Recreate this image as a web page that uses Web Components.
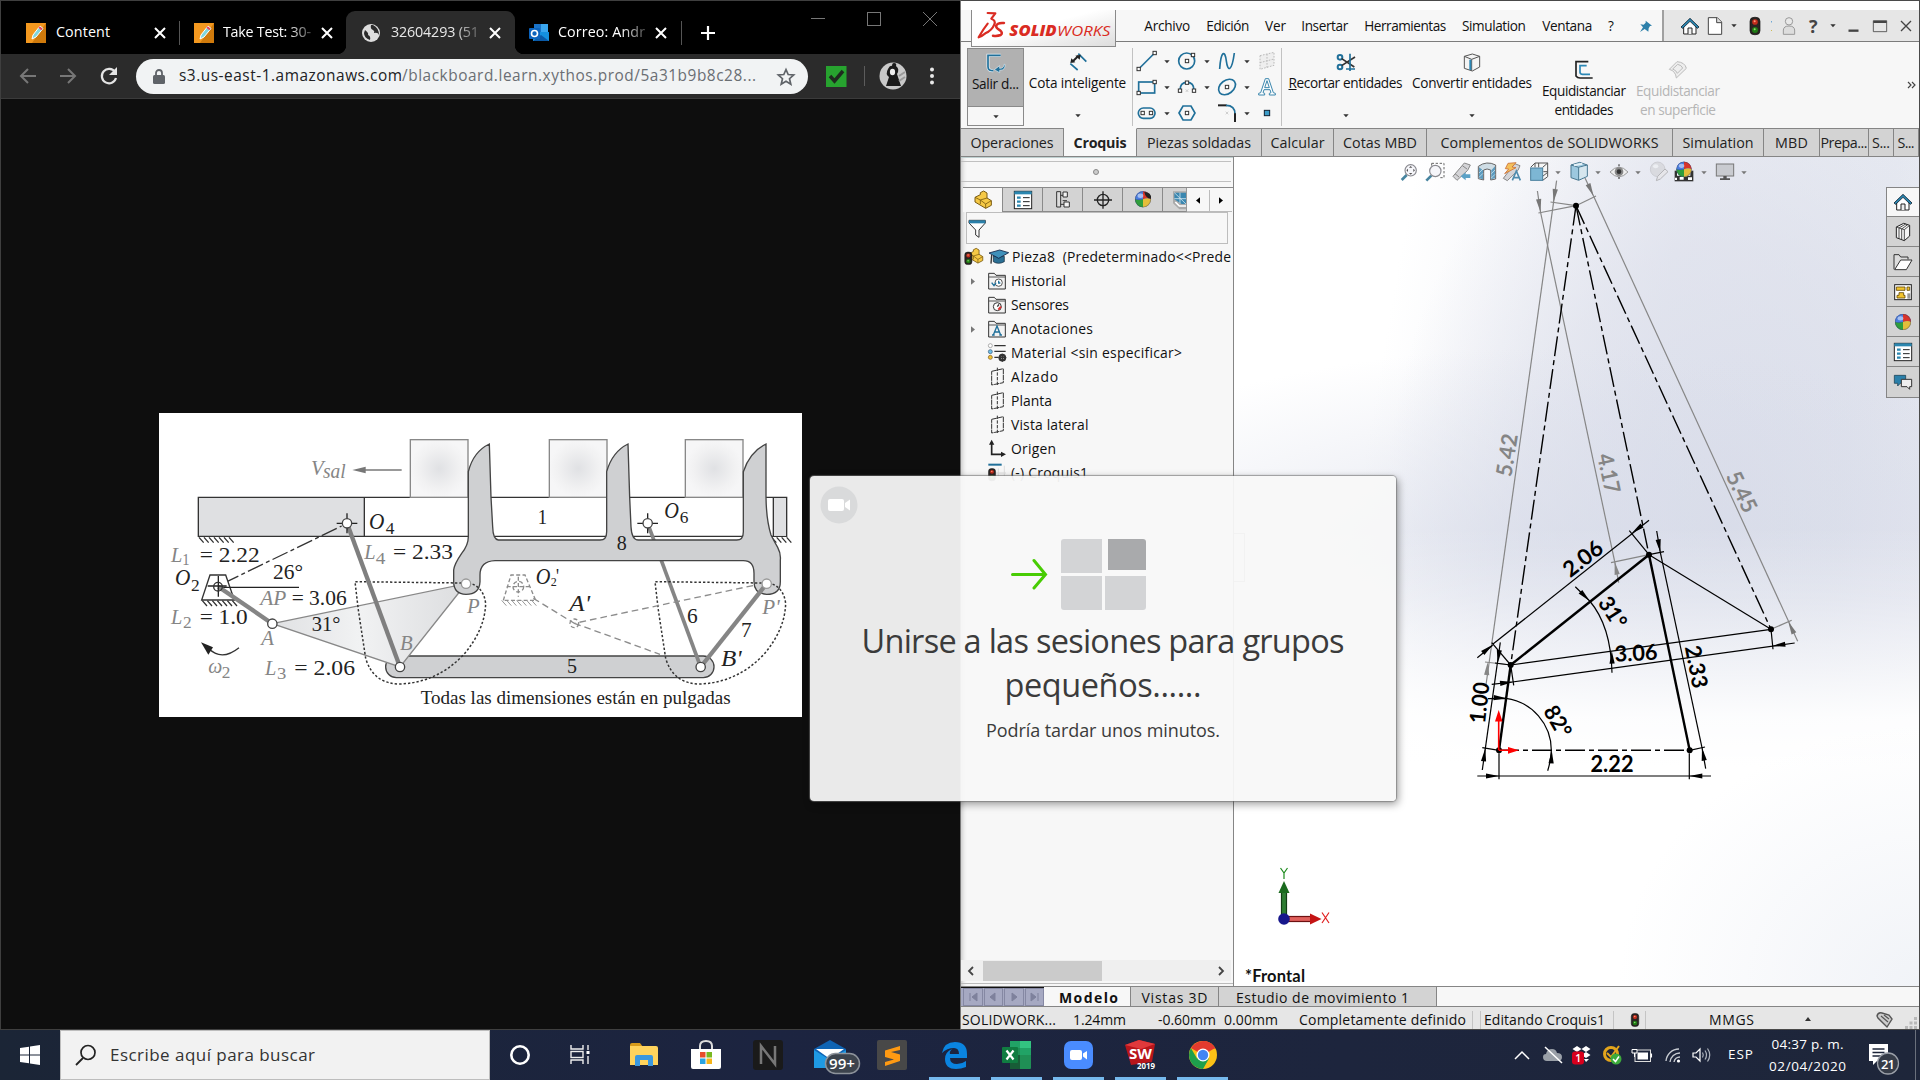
<!DOCTYPE html>
<html lang="es">
<head>
<meta charset="utf-8">
<title>Escritorio</title>
<style>
html,body{margin:0;padding:0;width:1920px;height:1080px;overflow:hidden;background:#0e0e0e}
body{font-family:"Open Sans","Noto Sans",sans-serif;font-size:14px;color:#111}
</style>
</head>
<body>
<desk-top></desk-top>
<script>
/* ---------- icon library: [width, height, viewBox, markup] ---------- */
const IC = {};
// three drawing units per pixel, centred at cx,cy
const ic3 = (n,cx,cy,w,h,m)=>{IC[n]=[w,h,`${cx-w*1.5} ${cy-h*1.5} ${w*3} ${h*3}`,m]};
const ic1 = (n,w,h,m)=>{IC[n]=[w,h,`0 0 ${w} ${h}`,m]};
const B='#20709a', K='#333';
const sq=(x,y)=>`<rect x="${x-5}" y="${y-5}" width="10" height="10" fill="#fff" stroke="${K}" stroke-width="3"/>`;
ic3('down',0,0,6,3,'<path d="M-8-4H8L0 5Z" fill="#333"/>');
ic3('downg',0,0,6,3,'<path d="M-8-4H8L0 5Z" fill="#777"/>');
ic3('exit',105,188,22,22,`<path d="M119 165H81V199Q81 211 97 211" fill="none" stroke="#e8f2f8" stroke-width="9"/><path d="M119 165H81V199Q81 211 97 211" fill="none" stroke="${B}" stroke-width="5"/><path d="M129 192Q129 204 116 204V196L100 208L116 217V210Q134 210 132 192Z" fill="${B}" stroke="#dceaf2" stroke-width="2"/>`);
ic3('dim',351,189,20,20,`<path d="M328 194L350 213M352 164L376 188" stroke="${B}" stroke-width="5"/><path d="M334 188L352 171" stroke="#222" stroke-width="6"/><path d="M328 192L331 178L343 190ZM359 167L356 182L343 170Z" fill="#222"/>`);
ic3('line',562,183,22,22,`<path d="M537 207L585 159" stroke="${B}" stroke-width="5"/>${sq(537,207)}${sq(585,159)}`);
ic3('circ',681,183,20,20,`<circle cx="680" cy="183" r="24" fill="none" stroke="${B}" stroke-width="5"/>${sq(681,183)}${sq(699,165)}`);
ic3('spline',801,183,20,20,`<path d="M779 207C783 150 795 150 799 183C803 215 815 218 823 159" fill="none" stroke="${B}" stroke-width="5"/>`);
ic3('plane3d',922,183,18,20,`<path d="M901 167L943 157V196L901 208ZM922 162V203M901 188L943 177" fill="#eee" stroke="#bbb" stroke-width="3" stroke-dasharray="5 4"/>`);
ic3('rect',562,261,22,20,`<rect x="537" y="246" width="48" height="33" fill="none" stroke="${B}" stroke-width="5"/>${sq(537,279)}${sq(585,246)}`);
ic3('arc',681,259,20,20,`<path d="M660 269Q660 245 681 245Q702 245 702 269" fill="none" stroke="${B}" stroke-width="5"/>${sq(660,270)}${sq(702,270)}${sq(681,246)}<path d="M677 266L685 274M685 266L677 274" stroke="#bbb" stroke-width="2"/>`);
ic3('ellip',801,261,20,20,`<ellipse cx="801" cy="261" rx="28" ry="20" transform="rotate(-38 801 261)" fill="none" stroke="${B}" stroke-width="5"/>${sq(801,261)}`);
ic3('texta',921,261,20,20,`<path d="M896 285V280L902 278L916 236H926L940 278L946 280V285H928V280L933 278L930 269H912L909 278L914 280V285ZM914 263H928L921 242Z" fill="#fff" stroke="#3a86ad" stroke-width="3"/>`);
ic3('slot',562,339,20,18,`<rect x="536" y="324" width="50" height="31" rx="15" fill="none" stroke="${B}" stroke-width="5"/>${sq(549,339)}${sq(574,339)}`);
ic3('hex',681,339,20,20,`<path d="M657 339L669 318H693L705 339L693 360H669Z" fill="none" stroke="${B}" stroke-width="5"/>${sq(681,339)}`);
ic3('fillet',801,339,20,20,`<path d="M774 316H800" stroke="#222" stroke-width="6"/><path d="M798 316Q825 316 825 342" fill="none" stroke="${B}" stroke-width="5"/><path d="M825 340V366" stroke="#222" stroke-width="6"/><path d="M797 335L805 343M805 335L797 343" stroke="#bbb" stroke-width="2"/>`);
ic3('point',921,339,8,8,`<rect x="913" y="331" width="16" height="16" fill="#3c9cc8" stroke="#123" stroke-width="3"/>`);
ic3('trim',1155,188,20,20,`<circle cx="1137" cy="174" r="7" fill="none" stroke="${B}" stroke-width="6"/><circle cx="1137" cy="203" r="7" fill="none" stroke="${B}" stroke-width="6"/><path d="M1142 178L1180 203M1142 199L1182 173" stroke="${K}" stroke-width="5"/><path d="M1167 163V215M1155 209H1182" stroke="${B}" stroke-width="5"/>`);
ic3('conv',96,188,18,20,`<path d="M73 171L97 164L119 171V203L97 215L73 207Z" fill="#f4f4f4" stroke="#555" stroke-width="3"/><path d="M73 171L95 180V214M95 180L119 171" fill="none" stroke="#555" stroke-width="3"/><path d="M91 181V212" stroke="#2b87b5" stroke-width="6"/>`);
ic3('offset',432,210,18,20,`<path d="M445 185H408V228Q412 234 420 234H458" fill="none" stroke="#222" stroke-width="5"/><path d="M440 197H420V217Q421 223 428 223H450" fill="none" stroke="#2b87b5" stroke-width="5"/>`);
ic3('offs2',714,210,20,20,`<path d="M688 208L711 185Q735 187 739 205L709 234Q707 213 688 208ZM698 207L713 193Q724 195 728 204L712 220Q709 211 698 207Z" fill="#eee" stroke="#bbb" stroke-width="3"/>`);
ic3('pin',620,78,14,14,`<path d="M619 62L638 77L632 78L628 85L627 95L616 87L602 96L611 82L603 73L613 74L619 68Z" fill="#2d80aa"/>`);
const house=(x,y)=>`<g transform="translate(${x} ${y})"><path d="M-19-2V24H18V-2L0-19Z" fill="#fff" stroke="#222" stroke-width="3"/><path d="M-27 3L0-23L27 3L22 7L0-14L-22 7Z" fill="#2a87b0" stroke="#123" stroke-width="2.5"/><path d="M-6 24V6H6V24" fill="#eee" stroke="#222" stroke-width="3"/></g>`;
ic3('home',0,0,20,20,house(0,0));
ic3('newdoc',825,78,16,20,`<path d="M805 53H832L845 66V103H805Z" fill="#fff" stroke="#444" stroke-width="3"/><path d="M830 53V68H845" fill="#ddd" stroke="#444" stroke-width="3"/>`);
const tl=(x,y,s)=>`<g transform="translate(${x} ${y}) scale(${s})"><rect x="-15" y="-26" width="30" height="52" rx="12" fill="#2a2422" stroke="#111" stroke-width="2"/><circle cx="0" cy="-12" r="8.500" fill="#c22c1c"/><circle cx="-1" cy="-14" r="3" fill="#ff9a7a"/><circle cx="0" cy="12" r="9" fill="#1f7a14"/><circle cx="-1" cy="10" r="3" fill="#8fe070"/></g>`;
ic3('light',0,0,12,20,tl(0,0,1));
ic3('lights',0,0,10,16,tl(0,0,.75));
ic3('dots2',0,0,3,12,'<path d="M0-14V-11" stroke="#38c" stroke-width="3"/><path d="M0 12V15" stroke="#cb5" stroke-width="3"/>');
ic3('user',1047,78,14,20,`<circle cx="1047" cy="64" r="11" fill="#e8e8e8" stroke="#999" stroke-width="3"/><path d="M1030 103V90Q1031 78 1047 78Q1063 78 1064 90V103Z" fill="#ddd" stroke="#999" stroke-width="3"/>`);
ic3('wmin',0,0,11,12,'<path d="M-15 14H15" stroke="#444" stroke-width="7"/>');
ic3('wmax',0,0,14,12,'<path d="M-20-16H20V17H-20Z" fill="none" stroke="#444" stroke-width="2.500"/><path d="M-20-12H20" stroke="#444" stroke-width="6"/>');
ic3('wx',0,0,12,12,'<path d="M-15-15L15 15M15-15L-15 15" stroke="#444" stroke-width="4"/>');
ic3('dchev',0,0,10,8,'<path d="M-12-9L-3 0L-12 9M0-9L9 0L0 9" fill="none" stroke="#444" stroke-width="3.500"/>');
/* heads-up view toolbar */
const lens=(x,y)=>`<path d="M${x-7} ${y+9}L${x-22} ${y+24}" stroke="#47849f" stroke-width="8"/><circle cx="${x+5}" cy="${y-5}" r="17" fill="#f6f6fa" stroke="#8a8a90" stroke-width="3.500"/>`;
ic3('zfit',0,0,20,20,lens(0,0)+'<path d="M5-18L0-13H10ZM5 8L0 3H10ZM-8-5L-3-10V0ZM18-5L13-10V0Z" fill="#555"/>');
ic3('zarea',0,0,22,20,'<path d="M-10-26H27V17H14M-10-26V-16" fill="none" stroke="#666" stroke-width="3" stroke-dasharray="7 5"/>'+lens(-4,2));
ic3('zprev',62,517,20,20,`<path d="M38 530L72 490L90 496L82 512L50 542Z" fill="#d4d4d7" stroke="#888" stroke-width="3"/><path d="M44 522L56 532M66 498L80 508" stroke="#888" stroke-width="3"/><path d="M90 524V535H76V542L61 530L76 518V524Z" fill="#5ba1c6"/>`);
ic3('section',141,517,20,20,`<path d="M115 500Q140 482 167 496V538L152 541V511Q141 505 131 511V541L115 537Z" fill="#cfdde5" stroke="#666" stroke-width="3"/><path d="M117 503L129 512V539L117 535ZM165 500L154 512V539L165 535Z" fill="#5d9cbf"/><path d="M117 520L129 508M117 533L129 521M154 522L165 511M154 535L165 524" stroke="#dfeef6" stroke-width="2"/>`);
ic3('dynview',218,517,22,20,`<path d="M192 536L226 492L242 498L236 512L204 543Z" fill="#d4d4d7" stroke="#888" stroke-width="3"/><path d="M206 491L230 489L218 502L230 504L196 522L208 508L198 507Z" fill="#f3c05c" stroke="#cc7038" stroke-width="2.500"/><path d="M219 542L231 514L243 542M223 534H239" stroke="#4f8cae" stroke-width="5" fill="none"/>`);
ic3('orient',297,517,20,20,`<path d="M272 503L285 490H323V531L308 542M323 490L308 503M285 490V503M296 490V503M310 516H323M308 530L323 518" fill="#f6f6f6" stroke="#555" stroke-width="3"/><rect x="272" y="505" width="36" height="37" fill="#7db6d4" stroke="#4a7f9d" stroke-width="3"/>`);
ic3('style',418,517,20,20,`<path d="M394 496L420 488L443 496V530L417 542L394 534Z" fill="#9cc8df" stroke="#4a7890" stroke-width="3"/><path d="M394 496L417 503V541M417 503L443 496" stroke="#4a7890" stroke-width="3" fill="none"/><path d="M419 504L441 498V529L419 539Z" fill="#d6e6ee"/><path d="M403 497L428 492" stroke="#e4f1f7" stroke-width="6"/>`);
ic3('eye',538,517,20,16,`<path d="M511 517Q538 488 565 517Q538 546 511 517Z" fill="#eee" stroke="#999" stroke-width="3"/><circle cx="538" cy="516" r="13" fill="#888"/><circle cx="538" cy="516" r="7" fill="#333"/><path d="M538 500V494M538 532V538" stroke="#555" stroke-width="4"/>`);
ic3('appear',658,517,22,20,`<circle cx="654" cy="509" r="22" fill="#d9dadf" stroke="#c2c3c8" stroke-width="2"/><ellipse cx="648" cy="500" rx="8" ry="6" fill="#eceef2"/><path d="M650 543L654 530L676 508L685 516L662 538Z" fill="#e6e6ea" stroke="#b5b5b9" stroke-width="3"/>`);
const ball=(x,y,r)=>`<g transform="translate(${x} ${y}) scale(${r/22})"><circle r="22" fill="#3a55c8"/><path d="M0 0V-22A22 22 0 0 0 -22 0Z" fill="#4a7ee0"/><path d="M0 0V-22A22 22 0 0 1 22 0Q12-6 0 0Z" fill="#d8342c"/><path d="M0 0Q-12 4 -22 0A22 22 0 0 0 0 22Z" fill="#2f9e3c"/><path d="M0 0Q12-6 22 0A22 22 0 0 1 0 22Z" fill="#e4be3a"/><circle r="21" fill="none" stroke="#444" stroke-opacity=".45" stroke-width="2"/><ellipse cx="-7" cy="-10" rx="8" ry="6" fill="#fff" opacity=".5"/></g>`;
ic3('scene',733,517,20,20,`<path d="M705 513H761V545H705Z" fill="#333"/><path d="M712 520H722V528H712ZM742 520H752V528H742ZM720 532H732V540H720ZM745 533H757V541H745ZM706 534H712V541H706Z" fill="#fff"/>${ball(733,509,23)}`);
ic3('screen',855,517,20,20,`<rect x="829" y="493" width="52" height="36" fill="#c9cbd0" stroke="#777" stroke-width="3"/><path d="M850 529V536H840V541H870V536H860V529Z" fill="#555"/>`);
/* feature manager */
const cube=(x,y,s)=>`<g transform="translate(${x} ${y}) scale(${s})"><path d="M-24-8L-8-16V-22L2-27L12-21V-6L25 2V16L8 25L-24 6Z" fill="#f6c945" stroke="#7a5b10" stroke-width="3" stroke-linejoin="round"/><path d="M-24-8L-8 0L12-6M-8 0V12M8 12L25 2M8 12V25M-8 0L8 12" fill="none" stroke="#7a5b10" stroke-width="2.500"/></g>`;
ic3('part',0,0,20,20,cube(0,0,1));
ic3('partl',43,305,20,20,cube(48,302,.85)+tl(26,309,.72));
ic3('props',0,0,20,20,`<rect x="-26" y="-26" width="52" height="52" fill="#fff" stroke="#222" stroke-width="3"/><rect x="-26" y="-26" width="52" height="9" fill="#2b87b0"/><path d="M-18-7H-7M-18 5H-7M-18 17H-7" stroke="#2b87b0" stroke-width="7"/><path d="M0-7H20M0 5H20M0 17H20" stroke="#222" stroke-width="3"/>`);
ic3('config',308,132,18,20,`<path d="M289 107H301V153H289ZM301 118H313M301 145H313" fill="#ddd" stroke="#333" stroke-width="3"/><path d="M308 108H321V123H308ZM311 138H327V153H311Z" fill="#f4f4f4" stroke="#333" stroke-width="3"/><path d="M307 134H320" stroke="#333" stroke-width="3"/>`);
ic3('cross',428,132,20,20,`<circle cx="428" cy="132" r="17" fill="none" stroke="#222" stroke-width="4"/><path d="M401 132H455M428 106V158" stroke="#222" stroke-width="4"/>`);
ic3('ball',0,0,20,20,ball(0,0,24));
ic3('ballk',0,0,20,20,ball(0,-2,24)+'<path d="M4-24Q26-24 24-4Q8-4 4-24Z" fill="#222"/>');
ic3('dimx',659,132,14,20,`<path d="M641 106H680V160H660L641 142Z" fill="#aaa"/><path d="M645 110H680V144L667 144L645 130Z" fill="#3a87b0"/><path d="M645 110L680 144M662 110V142M645 128L680 128" stroke="#cfe3ee" stroke-width="2.500"/><path d="M648 138L660 150H680" fill="none" stroke="#fff" stroke-width="5"/>`);
ic3('left',0,0,6,9,'<path d="M6-10V10L-6 0Z"/>');
ic3('right',0,0,6,9,'<path d="M-6-10V10L6 0Z"/>');
ic3('rightg',0,0,6,9,'<path d="M-6-10V10L6 0Z" fill="#777"/>');
ic3('funnel',52,220,20,20,`<path d="M28 197H77V205L58 226V248L48 241V226L28 205Z" fill="#fff" stroke="#333" stroke-width="3"/><path d="M28 197H77V206H28Z" fill="#2b80aa"/>`);
ic3('hat',114,302,22,18,`<path d="M97 299V316Q112 326 130 316V300Z" fill="#2a6f94" stroke="#123" stroke-width="2"/><path d="M84 290L116 281L143 289L113 306Z" fill="#3f90ba" stroke="#124" stroke-width="2.500"/><path d="M92 296L90 322" stroke="#333" stroke-width="4"/>`);
const fold=m=>`<path d="M-25 24V-23H-8L-3-17H25V24Z" fill="#f2f2f2" stroke="#333" stroke-width="3"/><path d="M-25-12H25" stroke="#555" stroke-width="3"/>${m}`;
ic3('hist',0,0,20,20,fold(`<circle cx="5" cy="5" r="11" fill="#fff" stroke="#555" stroke-width="3"/><path d="M5-1V6H10M-16 5L-9 14L-3 5" fill="none" stroke="${B}" stroke-width="4"/>`));
ic3('sens',0,0,20,20,fold(`<circle cx="1" cy="5" r="12" fill="#fff" stroke="#333" stroke-width="3"/><path d="M1 5L6-2" stroke="#333" stroke-width="4"/><path d="M4 14L12 5" stroke="#d33" stroke-width="6"/>`));
ic3('anno',0,0,20,20,fold(`<path d="M-11 18L0-9L11 18M-7 9H7M-15 18H-7M7 18H15" fill="none" stroke="${B}" stroke-width="4"/>`));
ic3('mat',0,0,20,20,`<path d="M-8-22H26M-8-5H26M-8 13H4" stroke="#333" stroke-width="4"/><circle cx="-20" cy="-22" r="6" fill="#fff" stroke="#888" stroke-width="2"/><circle cx="-20" cy="-4" r="6" fill="#6fc0e8" stroke="#357" stroke-width="2"/><circle cx="-20" cy="13" r="6" fill="#f4c430" stroke="#752" stroke-width="2"/><circle cx="16" cy="14" r="8" fill="none" stroke="#333" stroke-width="7"/><path d="M16 2V26M4 14H28" stroke="#333" stroke-width="4"/>`);
ic3('pl',0,0,16,20,`<path d="M-16-17L19-25V17L-16 24Z" fill="none" stroke="#333" stroke-width="3" stroke-dasharray="16 2"/><path d="M1-28V27" stroke="#333" stroke-width="3" stroke-dasharray="10 4"/>`);
ic3('orig',0,0,20,20,`<path d="M-16-20V16H18" fill="none" stroke="#222" stroke-width="5"/><path d="M-24-13L-16-28L-8-13ZM12 8L27 16L12 24Z" fill="#222"/>`);
ic3('sk',0,0,20,20,`<path d="M4-14V25M22-22V25M-8 0H27M-8 14H27" stroke="#ddd" stroke-width="3"/><path d="M-26-25H14" stroke="${B}" stroke-width="6"/>${tl(-15,5,.7)}`);
/* task pane */
ic3('lib',0,0,20,20,`<path d="M-20-15L2-26L20-20V12L4 26L-20 17Z" fill="#f4f4f4" stroke="#222" stroke-width="3" stroke-linejoin="round"/><path d="M-12-12V20M-4-9V23M4-7V25M-20-15L4-7L20-20M-12-12L8-24M-4-9L14-22" fill="none" stroke="#333" stroke-width="2.500"/>`);
ic3('open',0,0,20,20,`<path d="M-27 22V-22H-12L-7-15H15V-8" fill="#ddd" stroke="#333" stroke-width="3"/><path d="M-25 23L-7-6H27L10 23Z" fill="#fff" stroke="#333" stroke-width="3"/>`);
ic3('pal',0,0,20,20,`<rect x="-25" y="-22" width="50" height="45" fill="#fff" stroke="#222" stroke-width="3"/><path d="M-20-15H6V-5H-20ZM12-15H20V-5H12ZM-12 2H2V10H6V18H-18V10H-12Z" fill="#f3c52e" stroke="#654a08" stroke-width="2.500"/><rect x="13" y="4" width="9" height="16" fill="#999"/>`);
ic3('chat',0,0,20,20,`<path d="M-26-20H8V4H-8L-16 12V4H-26Z" fill="#2b80aa" stroke="#134" stroke-width="2"/><path d="M-5-8H26V14H20V22L12 14H-5Z" fill="#eee" stroke="#333" stroke-width="3"/>`);
/* browser */
ic1('pencil',21,20,`<rect width="20" height="20" fill="#f3981f"/><path d="M20 0V20H6Z" fill="#cf7a0c"/><path d="M6 16L7 12L14 3L17 5.500L10 14Z" fill="#7fd6dc" stroke="#fff" stroke-width="1"/><path d="M13 4L16 6.500" stroke="#e45" stroke-width="2"/>`);
ic1('globe',20,20,`<circle cx="10" cy="10" r="9" fill="#ddd"/><path d="M4 7Q8 10 7 12Q10 13 9 17Q3 15 3 10ZM10 2Q9 6 12 7Q14 8 13 10Q17 9 18 12Q18 5 12 2Z" fill="#2b2b2b"/>`);
ic1('outlook',20,20,`<rect x="5" y="1" width="14" height="9" fill="#1a73c8"/><rect x="12" y="1" width="7" height="9" fill="#3aa6ee"/><path d="M4 9H20V18H4Z" fill="#1490df"/><path d="M4 18L12 12L20 18Z" fill="#0a5aa8"/><rect x="0" y="5" width="11" height="11" rx="1" fill="#0b63bd"/><circle cx="5.500" cy="10.500" r="3" fill="none" stroke="#fff" stroke-width="1.600"/>`);
ic1('x',12,12,'<path d="M1 1L11 11M11 1L1 11" stroke="#fff" stroke-width="2"/>');
ic1('plus',16,16,'<path d="M8 1V15M1 8H15" stroke="#fff" stroke-width="2.200"/>');
ic1('bmin',14,14,'<path d="M0 6.500H14" stroke="#777" stroke-width="1"/>');
ic1('bmax',14,14,'<rect x=".5" y=".5" width="13" height="13" fill="none" stroke="#777"/>');
ic1('bx',14,14,'<path d="M0 0L14 14M14 0L0 14" stroke="#777"/>');
ic1('back',18,18,'<path d="M17 9H2M9 2L2 9L9 16" fill="none" stroke="#777" stroke-width="2"/>');
ic1('fwd',18,18,'<path d="M1 9H16M9 2L16 9L9 16" fill="none" stroke="#777" stroke-width="2"/>');
ic1('reload',20,20,'<path d="M16 6A7.200 7.200 0 1 0 17 12" fill="none" stroke="#e4e4e4" stroke-width="2.200"/><path d="M18 1V9H10Z" fill="#e4e4e4"/>');
ic1('lock',12,16,'<rect x="0" y="6" width="12" height="9" rx="1.500" fill="#5f6368"/><path d="M3 7V4A3 3 0 0 1 9 4V7" fill="none" stroke="#5f6368" stroke-width="1.800"/>');
ic1('star',20,20,'<path d="M10 2.500L12.200 7.500L17.700 8L13.500 11.700L14.800 17.200L10 14.300L5.200 17.200L6.500 11.700L2.300 8L7.800 7.500Z" fill="none" stroke="#5f6368" stroke-width="1.700"/>');
ic1('check',21,21,'<rect width="20.500" height="21" fill="#27a32f"/><path d="M4 10L8.500 15L17 5" fill="none" stroke="#1f2b1f" stroke-width="3.500"/>');
ic1('avatar',28,28,'<circle cx="14" cy="14" r="13.500" fill="#c9c9c9"/><path d="M15 1Q18 1 17 4Q21 7 18 12L22 24H7L10 15Q6 12 9 7Q11 3 13 4Q13 1 15 1Z" fill="#1b1b1b"/><ellipse cx="13.500" cy="10" rx="2.600" ry="3.300" fill="#eee"/><path d="M20 14L26 10M20 19L26 15" stroke="#999" stroke-width="2"/>');
ic1('kebab',6,20,'<g fill="#e8e8e8"><circle cx="3" cy="3.500" r="2"/><circle cx="3" cy="10" r="2"/><circle cx="3" cy="16.500" r="2"/></g>');
/* task bar */
ic1('win',20,20,'<path d="M0 3L9 1.800V9.500H0ZM10 1.600L20 0V9.500H10ZM0 10.500H9V18.200L0 17ZM10 10.500H20V20L10 18.400Z" fill="#fff"/>');
ic1('mag',22,22,'<circle cx="13" cy="8.500" r="7" fill="none" stroke="#222" stroke-width="1.700"/><path d="M8 14L1 21" stroke="#222" stroke-width="1.800"/>');
ic1('cort',22,22,'<circle cx="11" cy="11" r="8.700" fill="none" stroke="#fff" stroke-width="2.600"/>');
ic1('tview',20,20,'<path d="M1 0V4H13V0M1 19V15H13V19" fill="none" stroke="#eee" stroke-width="1.400"/><rect x="1" y="6.500" width="12" height="6" fill="none" stroke="#eee" stroke-width="1.400"/><path d="M18 0V5M18 11V19" stroke="#eee" stroke-width="1.400"/><path d="M18 6V9" stroke="#fff" stroke-width="3"/>');
ic1('folder',28,24,'<path d="M0 2Q0 0 2 0H10L13 4H0Z" fill="#d79b1b"/><path d="M0 3H26Q28 3 28 5V22H0Z" fill="#ffd35c"/><path d="M5 23V14Q5 12 7 12H21Q23 12 23 14V23H18V17H10V23Z" fill="#3b97de"/>');
ic1('store',30,30,'<path d="M9 9V6Q9 1 15 1Q21 1 21 6V9" fill="none" stroke="#ddd" stroke-width="2"/><path d="M0 9H30V27Q30 29 28 29H2Q0 29 0 27Z" fill="#fff"/><path d="M9 12H14.500V17.500H9Z" fill="#e74c2c"/><path d="M15.500 12H21V17.500H15.500Z" fill="#79b820"/><path d="M9 18.500H14.500V24H9Z" fill="#29a3e2"/><path d="M15.500 18.500H21V24H15.500Z" fill="#f6b51a"/>');
ic1('nn',30,30,'<rect width="30" height="30" rx="3" fill="#1a1a1a"/><path d="M8 24V6L22 24V6" fill="none" stroke="#777" stroke-width="2.500"/>');
ic1('mail',46,36,'<path d="M0 10L16 1L32 10V29H0Z" fill="#0f64b4"/><path d="M2 10H30L16 20Z" fill="#fff"/><path d="M0 11L16 21L32 11V29H0Z" fill="#1f9ae4"/><rect x="11.500" y="14.500" width="34" height="20" rx="10" fill="#3c434d" stroke="#8d939b" stroke-width="1.500"/><text x="15" y="30" font-size="14.500" font-weight="600" fill="#fff" textLength="26" lengthAdjust="spacingAndGlyphs">99+</text>');
ic1('subl',30,30,'<rect width="30" height="30" rx="2" fill="#484848"/><path d="M23 6L8 10.500V17L17 19.500L8 22V26L23 21V14.500L14 12L23 10Z" fill="#ff9a12"/>');
ic1('edge',27,28,'<path d="M1 12Q3 1 14 1Q26 1 26 13V17H9Q9 23 16 23Q21 23 25 20V26Q20 28 15 28Q4 28 4 18Q4 11 11 8Q8 11 9 13H18Q18 7 13 7Q6 7 1 12Z" fill="#0a84e0"/>');
ic1('excel',30,28,'<rect x="8" width="21" height="28" rx="1" fill="#1f8f55"/><path d="M8 0H18V7H8Z" fill="#21a366"/><path d="M18 0H29V7H18Z" fill="#33c481"/><path d="M18 7H29V14H18Z" fill="#21a366"/><path d="M8 14H18V28H8Z" fill="#185c37"/><rect y="6" width="16" height="16" rx="1" fill="#107c41"/><path d="M4.500 9.500L11.500 18.500M11.500 9.500L4.500 18.500" stroke="#fff" stroke-width="2.200"/>');
ic1('zoom',29,29,'<rect width="29" height="28" rx="7" fill="#4a8cff"/><rect x="6" y="9" width="12" height="10" rx="2" fill="#fff"/><path d="M19 12.500L23 10V18.500L19 15.500Z" fill="#fff"/>');
ic1('sw19',32,30,'<path d="M0 5L14 0L30 4L27 22L6 25Z" fill="#b8161b"/><path d="M0 5L14 0L30 4L16 9Z" fill="#e0393c"/><text x="4" y="18.500" font-size="14.500" font-weight="700" fill="#fff" textLength="23" lengthAdjust="spacingAndGlyphs">SW</text><text x="12" y="28.500" font-size="8" font-weight="700" fill="#fff" textLength="18" lengthAdjust="spacingAndGlyphs">2019</text>');
ic1('chrome',28,28,'<circle cx="14" cy="14" r="14" fill="#fbc116"/><path d="M14 14L1.900 7A14 14 0 0 1 26.100 7Z" fill="#e33b2e"/><path d="M14 0A14 14 0 0 1 26.500 7.500H14Z" fill="#e33b2e"/><path d="M1.900 7A14 14 0 0 0 14 28L20 17.500L8 17.500Z" fill="#1ea04c"/><circle cx="14" cy="14" r="6.500" fill="#fff"/><circle cx="14" cy="14" r="5.200" fill="#4285f4"/>');
ic1('chev',16,10,'<path d="M1 9L8 2L15 9" fill="none" stroke="#fff" stroke-width="1.500"/>');
ic1('cloud',22,18,'<path d="M5 15Q1 15 1 11Q1 8 4 8Q5 3 10 3Q14 3 15 7Q20 7 20 11Q20 15 16 15Z" fill="#9aa0a8"/><path d="M3 1L20 17" stroke="#fff" stroke-width="1.500"/>');
ic1('dbox',20,20,'<path d="M5 1L9.500 4L5 7L.5 4ZM14 1L18.500 4L14 7L9.500 4ZM5 7L9.500 10L5 13L.5 10ZM14 7L18.500 10L14 13L9.500 10ZM12 14H17L14 17Z" fill="#fff"/><rect y="6.500" width="12" height="13" rx="3" fill="#d8001d"/><text x="3.200" y="17" font-size="10.500" font-weight="600" fill="#fff">1</text>');
ic1('sync',20,20,'<circle cx="8" cy="9" r="6.500" fill="none" stroke="#e3a51c" stroke-width="3"/><path d="M4 8L8 12L16 1" fill="none" stroke="#e3a51c" stroke-width="2"/><circle cx="13" cy="14" r="5.500" fill="#3cab3c"/><path d="M10 14L12.500 16.500L16 11.500" fill="none" stroke="#fff" stroke-width="1.500"/>');
ic1('batt',20,14,'<rect x="5.500" y="4.500" width="10.500" height="7" fill="#fff"/><rect x="3" y="2" width="15.500" height="11.500" fill="none" stroke="#ddd" stroke-width="1"/><path d="M19.300 5.500V9.500" stroke="#fff" stroke-width="1.500"/><path d="M0 1.500H5V5H0ZM2.500 5V9" stroke="#fff" fill="#1c2438"/>');
ic1('wifi',16,16,'<g fill="none" stroke="#c8ccd2" stroke-width="1.400"><path d="M1 14A13 13 0 0 1 14 2"/><path d="M5 15A10 10 0 0 1 15 6"/><path d="M9 15A6 6 0 0 1 15 10"/></g><circle cx="13.500" cy="14" r="1.600" fill="#fff"/>');
ic1('vol',20,16,'<path d="M1 6H4L8 2V14L4 10H1Z" fill="none" stroke="#fff" stroke-width="1.200"/><path d="M10.500 5.500Q12 8 10.500 10.500M13 3.500Q16 8 13 12.500M15.500 1.500Q20 8 15.500 14.500" fill="none" stroke="#aeb4bd" stroke-width="1.200"/>');
ic1('notif',32,32,'<path d="M0 0H19V17H8L4 21V17H0Z" fill="#fff"/><path d="M3.500 5H15.500M3.500 8.500H15.500M3.500 12H12" stroke="#1c2438" stroke-width="1.300"/><circle cx="19" cy="19.500" r="10.500" fill="#363c48" stroke="#9ba0a8" stroke-width="1.300"/><text x="12" y="24.500" font-size="13" font-weight="600" fill="#fff" textLength="14">21</text>');
ic1('tri',6,5,'<path d="M0 4L3 0L6 4Z" fill="#333"/>');
ic1('tag',18,16,'<path d="M1 4Q2 0 6 1L13 3L16 7L11 15L8 12L2 6Z" fill="#ccc" stroke="#555" stroke-width="1.400"/><path d="M5 4L12 10M8 3L13 7" stroke="#555" stroke-width="1.200"/>');
ic1('grip',13,12,'<path d="M9 0H12V3H9ZM9 4.500H12V7.500H9ZM9 9H12V12H9ZM4.500 4.500H7.500V7.500H4.500ZM4.500 9H7.500V12H4.500ZM0 9H3V12H0Z" fill="#b9b9b9"/>');

/* ---------- base elements ---------- */
class UiIcon extends HTMLElement{
  connectedCallback(){
    if(this.shadowRoot)return;
    const [w,h,vb,m]=IC[this.getAttribute('name')];
    this.attachShadow({mode:'open'}).innerHTML=`<style>:host{display:block;flex:none;width:${w}px;height:${h}px}svg{display:block;overflow:visible}</style><svg width="${w}" height="${h}" viewBox="${vb}">${m}</svg>`;
  }
}
customElements.define('ui-icon',UiIcon);

/* text label whose tracking is tuned to an intended width */
class UiText extends HTMLElement{
  connectedCallback(){
    if(this.shadowRoot)return;
    this.attachShadow({mode:'open'}).innerHTML='<style>:host{display:inline-block;white-space:pre;flex:none;line-height:1.3}</style><slot></slot>';
    const w=+this.getAttribute('w'), n=this.textContent.length;
    if(w&&n>1){
      const nat=this.getBoundingClientRect().width;
      this.style.letterSpacing=((w+1-nat)/(n-1)).toFixed(3)+'px';
      this.style.marginRight=(-(w+1-nat)/(n-1)).toFixed(3)+'px';
    }
  }
}
customElements.define('ui-text',UiText);

const icon=n=>`<ui-icon name="${n}"></ui-icon>`;
const T=(s,w,st='')=>`<ui-text w="${w}" style="${st}">${s}</ui-text>`;
// flow(start, [[left, width, html, extraStyle]...]): row items separated by margins
const flow=(start,items)=>{let c=start;return items.map(([x,w,h,st=''])=>{const m=x-c;c=x+w;return `<div class="it" style="margin-left:${m.toFixed(2)}px;width:${w}px;${st}">${h}</div>`}).join('')};
const ci=(n,cx,dy=0)=>{const w=IC[n][0];return [cx-w/2,w,icon(n),dy?`margin-top:${dy}px`:'']};
const define=(tag,css,html)=>customElements.define(tag,class extends HTMLElement{
  connectedCallback(){ if(this.shadowRoot)return;
    this.attachShadow({mode:'open'}).innerHTML=`<style>*{box-sizing:border-box}.it{flex:none;display:flex;align-items:center;white-space:nowrap}${css}</style>${html}`;}
});

/* ---------- mechanism figure ---------- */
const S=(x,y,s,len,o='')=>`<text x="${x}" y="${y}" textLength="${len}" lengthAdjust="spacingAndGlyphs" ${o}>${s}</text>`;
const GI='fill="#858585" font-style="italic"', KI='font-style="italic" font-size="67"', SB='font-size="50"', GS='fill="#858585" font-size="52"';
const hatch=(x,y,n,st=15)=>Array.from({length:n},(_,i)=>`M${x+i*st} ${y}l14 16`).join('');
const pin=(x,y,r=14)=>`<circle cx="${x}" cy="${y}" r="${r}" fill="#fff" stroke="#444" stroke-width="4"/>`;
const crossh=(x,y)=>`<path d="M${x-31} ${y}h62M${x} ${y-30}v60" stroke="#222" stroke-width="4"/>`+pin(x,y);
const path='<path d="M920 519L600 515L610 600L632 745Q655 822 735 822Q845 818 925 735Q990 660 992 580Q985 530 945 520" fill="none" stroke="#333" stroke-width="4.500" stroke-dasharray="7 6"/>';
const block=x=>`<rect x="${x}" y="89" width="173" height="173" fill="url(#bx)" stroke="#888" stroke-width="4"/>`;
define('mechanism-figure',`:host{display:block;width:643px;height:304px;background:#fff;font-family:"Liberation Serif",serif}svg{display:block}`,
`<svg width="643" height="304" viewBox="12 9 1929 912" font-size="64" fill="#222">
<defs><radialGradient id="bx"><stop offset="0" stop-color="#e0e1e4"/><stop offset=".7" stop-color="#f1f1f2"/><stop offset="1" stop-color="#f6f6f7"/></radialGradient>
<linearGradient id="tr"><stop offset="0" stop-color="#e0e1e3"/><stop offset=".45" stop-color="#f1f2f3"/><stop offset="1" stop-color="#dcdddf"/></linearGradient></defs>
<rect x="130" y="262" width="498" height="117" fill="#dfe0e2"/>
<path d="M130 262H1895V379H130ZM628 262V379M1855 262V379" fill="none" stroke="#333" stroke-width="4"/>
<rect x="1857" y="264" width="36" height="113" fill="#dfe0e2"/>
<path d="${hatch(132,382,7)}${hatch(1850,382,4)}" stroke="#333" stroke-width="4"/>
${block(766)}${block(1183)}${block(1591)}
<rect x="692" y="738" width="985" height="65" rx="32" fill="#cfd0d2" stroke="#444" stroke-width="4"/>
<path d="M352 641L933 521L735 771Z" fill="url(#tr)" stroke="#888" stroke-width="4"/>
<path d="M1478 340L1637 771" stroke="#858585" stroke-width="11"/>
<path d="M940 185Q955 125 1003 102L1008 262L1013 350Q1014 388 1030 390H1335Q1355 390 1355 365V185Q1372 125 1419 102L1424 262L1428 350Q1430 390 1450 390H1745Q1765 390 1765 365V185Q1785 125 1833 102V262Q1834 330 1848 375Q1858 395 1868 412Q1878 430 1876 450V515Q1876 553 1835 553Q1797 551 1797 515V490Q1797 452 1765 452H1020Q975 454 975 495V515Q973 553 933 553Q896 551 896 515V480Q898 462 920 430Q940 405 940 380Z" fill="#cfd0d2" stroke="#444" stroke-width="4"/>
${path}<g transform="translate(900 0)">${path}</g>
<g fill="none" stroke="#8c8c8c" stroke-width="4" stroke-dasharray="20 12"><path d="M1135 565L1258 640L1797 526M1258 640L1515 733"/></g>
<g fill="none" stroke="#8c8c8c" stroke-width="4" stroke-dasharray="12 7"><path d="M1045 571L1068 495H1110L1142 571ZM1055 530H1125M1090 500V560"/><circle cx="1090" cy="530" r="16"/><circle cx="1258" cy="640" r="13"/></g>
<path d="${hatch(1040,571,7)}" stroke="#999" stroke-width="3"/>
<path d="M205 520L560 348" stroke="#333" stroke-width="4" stroke-dasharray="50 10 12 10"/>
<path d="M165 495H212L238 570H140Z" fill="#fff" stroke="#333" stroke-width="4"/>
<path d="${hatch(142,572,7)}" stroke="#333" stroke-width="4"/>
<path d="M190 532H432" stroke="#222" stroke-width="4"/>
<path d="M190 530L352 641" stroke="#858585" stroke-width="13"/>
<path d="M158 528H215M190 498V560" stroke="#222" stroke-width="4"/><circle cx="189" cy="530" r="13" fill="none" stroke="#333" stroke-width="4"/>
<path d="M576 340L735 771" stroke="#7f7f7f" stroke-width="13"/>
<path d="M1835 521L1637 771" stroke="#858585" stroke-width="13"/>
${crossh(576,340)}${crossh(1478,340)}${pin(352,641)}${pin(735,771)}${pin(1637,771)}
<circle cx="933" cy="521" r="14" fill="#fff" stroke="#999" stroke-width="4"/><circle cx="1835" cy="521" r="14" fill="#fff" stroke="#999" stroke-width="4"/>
<path d="M625 180H740" stroke="#777" stroke-width="4"/><path d="M592 180L632 170V190Z" fill="#777"/>
<path d="M160 715Q200 755 252 713" fill="none" stroke="#333" stroke-width="4"/><path d="M138 697L174 712L160 734Z"/>
${S(468,194,'V',38,GI)}${S(504,205,'sal',68,GI)}
${S(642,357,'O',46,KI)}${S(692,371,'4',26,SB)}
${S(628,447,'L',34,GI)}${S(662,462,'4',29,GS)}${S(714,447,'= 2.33',180)}
${S(48,455,'L',34,GI)}${S(82,465,'1',22,GS)}${S(134,455,'= 2.22',180)}
${S(60,525,'O',46,KI)}${S(108,542,'2',26,SB)}
${S(354,506,'26°',90)}
${S(316,585,'AP',78,GI)}${S(410,585,'= 3.06',165)}
${S(48,642,'L',34,GI)}${S(84,655,'2',26,GS)}${S(134,642,'= 1.0',144)}
${S(470,662,'31°',86)}${S(319,704,'A',38,GI)}${S(735,721,'B',38,GI)}${S(936,609,'P',38,GI)}
${S(160,790,'ω',42,GI)}${S(200,803,'2',26,GS)}
${S(330,796,'L',34,GI)}${S(366,808,'3',28,GS)}${S(418,796,'= 2.06',182)}
${S(1148,343,'1',28)}${S(1385,419,'8',30)}${S(1236,789,'5',30)}${S(1596,639,'6',32)}${S(1758,681,'7',32)}
${S(1528,323,'O',44,KI)}${S(1574,338,'6',26,SB)}
${S(1142,522,'O',44,KI)}${S(1187,528,'2',18,'font-size="36"')}${S(1203,520,"'",9)}
${S(1243,602,"A'",62,KI)}${S(1698,769,"B'",62,KI)}${S(1822,611,"P'",52,GI)}
${S(797,882,'Todas las dimensiones están en pulgadas',930,'font-size="55"')}
</svg>`);

/* ---------- browser ---------- */
const fade='overflow:hidden;-webkit-mask-image:linear-gradient(90deg,#000 72%,rgba(0,0,0,.25))';
define('browser-tabs',`:host{display:flex;height:53px;background:#000;color:#fff;align-items:center;font-size:14.3px;padding-top:10px}
.sep{width:1px;height:24px;background:#555}
.act{align-self:stretch;background:#2b2b2b;border-radius:9px 9px 0 0;position:relative;color:#e8e8e8}
.act:before,.act:after{content:"";position:absolute;bottom:0;width:9px;height:9px}
.act:before{left:-9px;background:radial-gradient(circle at 0 0,transparent 9px,#2b2b2b 9.500px)}
.act:after{right:-9px;background:radial-gradient(circle at 100% 0,transparent 9px,#2b2b2b 9.500px)}`,
flow(1,[ci('pencil',36),[56,90,T('Content',53)],ci('x',159.500),[179,1,'<span class="sep"></span>'],ci('pencil',204),[223,89,T('Take Test: 30-',87),fade],ci('x',327)])
+`<div class="it act" style="margin-left:13px;width:169px">`+flow(346,[ci('globe',371),[391,88,T('32604293 (51',87),fade],ci('x',494.500)])+`</div>`
+flow(515,[ci('outlook',539),[558,88,T('Correo: Andr',86),fade],ci('x',661),[681,1,'<span class="sep"></span>'],ci('plus',708)])
+`<div class="it" style="margin-top:-27px">`+flow(716,[ci('bmin',817.500),ci('bmax',873.500),ci('bx',930)])+`</div>`);
define('address-bar',`:host{display:flex;height:45px;background:#2b2b2b;align-items:center;border-bottom:1px solid #3b3b3b}
.om{height:35px;border-radius:18px;background:#f1f3f4;color:#202124;font-size:15.4px}.sep{width:1px;height:20px;background:#5c5c5c}`,
flow(1,[ci('back',28),ci('fwd',68),ci('reload',108.500)])
+`<div class="it om" style="margin-left:17.500px;width:672px;padding-top:1px">`+flow(136,[ci('lock',158.500),[179,223,T('s3.us-east-1.amazonaws.com',222)],[402,354,T('/blackboard.learn.xythos.prod/5a31b9b8c28...',353),'color:#6a6e73'],ci('star',786)])+`</div>`
+flow(808,[ci('check',836.500),[864,1,'<span class="sep"></span>'],ci('avatar',893),ci('kebab',932)]));
define('browser-window',`:host{display:flex;flex-direction:column;width:960px;height:1030px;background:#0e0e0e;border:1px solid #3f3f3f;border-right:0;box-sizing:border-box}
.page{flex:1;display:flex;padding:314px 0 0 158px}`,
`<browser-tabs></browser-tabs><address-bar></address-bar><div class="page"><mechanism-figure></mechanism-figure></div>`);

/* ---------- CAD window ---------- */
define('cad-menu',`:host{display:flex;height:41px;box-sizing:border-box;padding-top:9px;background:linear-gradient(#fff 9px,#f7f7f7 9px);border-bottom:1px solid #7c7c7c;font-size:13.6px;align-items:center}
.logo{position:relative;align-self:flex-start;flex:none;width:145px;height:37px;margin-left:10px;border:1px solid #8a8a8a;border-top:0;background:linear-gradient(165deg,#fff 45%,#ddd);z-index:2}
.right{align-self:stretch;background:#e6e6e6;border-left:2px solid #a0a0a0;flex:1}`,
`<div class="logo"><svg width="143" height="36" viewBox="36 27 429 108" style="display:block"><g fill="none" stroke="#da2b22" stroke-width="6.500" stroke-linecap="round" stroke-linejoin="round"><path d="M83 36L106 37L94 53Q108 58 103 70Q96 88 76 97Q65 106 56 109Q70 84 83 68"/><path d="M132 66Q112 64 108 75Q108 81 120 88Q130 96 122 102Q112 106 99 104" stroke-width="7.500"/></g><text x="148" y="104" font-size="46" font-weight="800" font-style="italic" fill="#da2b22" textLength="142" lengthAdjust="spacingAndGlyphs">SOLID</text><text x="291" y="104" font-size="46" font-weight="400" font-style="italic" fill="#da2b22" textLength="160" lengthAdjust="spacingAndGlyphs">WORKS</text></svg></div>`
+flow(1116,[[1144.300,45,T('Archivo',45)],[1206.300,42,T('Edición',42)],[1265,20,T('Ver',20)],[1301.300,46,T('Insertar',46)],[1364.300,82,T('Herramientas',81)],[1462,64,T('Simulation',63)],[1542.300,50,T('Ventana',49)],[1608,8,T('?',0)],ci('pin',1646.500)])
+`<div class="it right" style="margin-left:8.500px">`+flow(1664,[ci('home',1690),ci('newdoc',1715),ci('down',1734.500),ci('light',1755),ci('dots2',1771.500),ci('user',1789),[1809,14,T('?',0,'font:700 18px Open Sans;color:#444')],ci('down',1833.500),ci('wmin',1854),ci('wmax',1880),ci('wx',1906)])+`</div>`);

const tool=(ic,lines,w,arrow,st)=>`<div class="tool" style="${st}">${icon(ic)}${lines.map(([s,x])=>T(s,x)).join('')}${arrow?`<span class="ar">${icon('down')}</span>`:''}</div>`;
define('cad-ribbon',`:host{display:flex;height:86px;background:#f7f7f7;font-size:13.6px}
.sal{width:57px;height:78px;margin:6px 0 0 6px;border:1px solid #8a8a8a;display:flex;flex-direction:column;flex:none}
.sal .t{height:58px;background:#b1b1b1;border-bottom:1px solid #8a8a8a;display:flex;flex-direction:column;align-items:center;padding-top:3px}
.sal .b{flex:1;display:flex;align-items:center;justify-content:center}
.tool{display:flex;flex-direction:column;align-items:center;height:86px;flex:none}
.tool ui-text,.sal ui-text{line-height:19px}
.tool ui-icon+ui-text{margin-top:1px}
.ar{margin-top:auto;margin-bottom:11px}
.sep{width:1px;height:78px;margin-top:6px;background:#c2c2c2;flex:none}
.grid{display:flex;flex-direction:column;width:148px;flex:none}
.row{display:flex;align-items:center;height:26px}`,
`<div class="sal"><div class="t">${icon('exit')}${T('Salir d...',46)}</div><div class="b">${icon('down')}</div></div>`
+tool('dim',[['Cota inteligente',96.500]],0,1,'margin-left:5px;width:97px;padding-top:10px')
+`<div class="sep" style="margin-left:6px"></div><div class="grid" style="padding-top:6px">`
+[['line','circ','spline','plane3d'],['rect','arc','ellip','texta'],['slot','hex','fillet','point']].map((r,i)=>`<div class="row">`+flow(1133,[ci(r[0],1147.300),ci('down',1166.700),ci(r[1],1187),...(i<2?[ci('down',1206.700)]:[]),ci(r[2],1227),ci('down',1246.700),ci(r[3],1267)])+`</div>`).join('')
+`</div><div class="sep"></div>`
+tool('trim',[['<u>R</u>ecortar entidades',113]],0,1,'margin-left:7px;width:113px;padding-top:10px')
+tool('conv',[['Convertir entidades',119]],0,1,'margin-left:10px;width:120px;padding-top:10px')
+tool('offset',[['Equidistanciar',83],['entidades',58]],0,0,'margin-left:10px;width:84px;padding-top:18px')
+tool('offs2',[['Equidistanciar',83],['en superficie',75]],0,0,'margin-left:10px;width:84px;padding-top:18px;color:#b5b5b5')
+`<div class="it" style="margin-left:187px">${icon('dchev')}</div>`);

const tb=(s,w,tw,c='')=>`<div class="tab ${c}" style="width:${w}px">${T(s,tw)}</div>`;
define('cad-tabs',`:host{display:flex;box-sizing:border-box;height:29px;font-size:14.3px;color:#222;background:#f7f7f7;border-bottom:1px solid #858585}
.tab{flex:none;display:flex;align-items:center;justify-content:center;background:#d3d3d3;border:1px solid #858585;border-width:1px 1px 0 0;overflow:hidden;padding-top:1px}
.on{background:#f7f7f7;font-weight:700;border-top-color:#f7f7f7}`,
tb('Operaciones',103,82)+tb('Croquis',73,52,'on')+tb('Piezas soldadas',125,103)+tb('Calcular',72,53)+tb('Cotas MBD',93,73)+tb('Complementos de SOLIDWORKS',246,217)+tb('Simulation',91,70)+tb('MBD',56,32)+tb('Prepa...',49,46)+tb('S...',25,17)+tb('S...',25,16));

const node=(ic,s,w,ex)=>`<div class="node"><span class="ex">${ex?icon('rightg'):''}</span><span class="ni">${icon(ic)}</span>${T(s,w)}</div>`;
define('feature-tree',`:host{display:flex;flex-direction:column;box-sizing:border-box;flex:none;width:273px;background:#f7f7f7;border-right:1px solid #858585;font-size:13.9px;box-shadow:inset 5px 0 5px -4px #bbb}
.top{height:30px;border-top:1px solid #bfd0d0;display:flex;flex:none}
.top div{flex:1;margin:3px 2px 5px 0;border:1px solid #c0c0c0;border-width:1px 0;display:flex;justify-content:center;align-items:center}
.top i{width:6px;height:6px;border-radius:50%;background:#ccc;border:1px solid #888}
.tabs{display:flex;height:25px;flex:none;margin-left:2px;border-top:1px solid #8a8a8a}
.tabs div{flex:none;display:flex;align-items:center;justify-content:center;background:#d3d3d3;border-right:1px solid #8a8a8a;border-bottom:1px solid #8a8a8a;width:40px}
.tabs .on{background:#f7f7f7;border-bottom:0}.tabs .ar{width:23px;background:#f7f7f7;border-color:#bbb;margin-top:2px}
.filter{flex:none;height:32px;margin:0 5px 0 5px;border:1px solid #bdbdbd;display:flex;align-items:center;padding-left:0}
.node{display:flex;align-items:center;height:24px;flex:none;overflow:hidden}
.ex{width:17px;padding-left:9px;display:flex;flex:none}.ni{width:33px;display:flex;justify-content:center;padding-left:5px;flex:none}
.tree{flex:1;overflow:hidden;display:flex;flex-direction:column;padding-top:1px}
.sb{height:21px;flex:none;display:flex;background:#efefef;margin-right:2px;align-items:center;color:#444}
.sb b{display:block;width:119px;height:20px;background:#cbcbcb}
.line{height:3px;flex:none;border-bottom:1px solid #bbb;margin-bottom:2px}`,
`<div class="top"><div><i></i></div></div>
<div class="tabs"><div class="on">${icon('part')}</div><div>${icon('props')}</div><div>${icon('config')}</div><div>${icon('cross')}</div><div>${icon('ballk')}</div><div style="width:24px;justify-content:flex-end;border-right:1px solid #999">${icon('dimx')}</div><div class="ar">${icon('left')}</div><div class="ar" style="width:22px;border-right:0">${icon('right')}</div></div>
<div class="filter">${icon('funnel')}</div>
<div class="tree"><div class="node" style="padding-left:3px;margin-right:0">${icon('partl')}<span style="margin:0 2px 0 4px">${icon('hat')}</span>${T('Pieza8  (Predeterminado&lt;&lt;Prede',218)}</div>
${node('hist','Historial',54,1)}${node('sens','Sensores',57)}${node('anno','Anotaciones',81,1)}${node('mat','Material &lt;sin especificar&gt;',170)}${node('pl','Alzado',46)}${node('pl','Planta',40)}${node('pl','Vista lateral',76.500)}${node('orig','Origen',44)}${node('sk','(-) Croquis1',76)}</div>
<div class="sb">${flow(961,[[967,10,'<svg width="8" height="10"><path d="M6 1L2 5L6 9" fill="none" stroke="#444" stroke-width="1.800"/></svg>'],[983,119,'<b></b>'],[1217,10,'<svg width="8" height="10"><path d="M2 1L6 5L2 9" fill="none" stroke="#444" stroke-width="1.800"/></svg>']])}</div><div class="line"></div>`);

/* sketch viewport; coordinates follow the desktop pixel grid */
const p8=(x,y)=>[1440+x/3,500+y/3];
const L=(a,b,o='')=>`<path d="M${a.map(v=>v.toFixed(1))}L${b.map(v=>v.toFixed(1))}" ${o}/>`;
const arrow=(tip,from,c='#000',len=13,wd=2.600)=>{const dx=tip[0]-from[0],dy=tip[1]-from[1],d=Math.hypot(dx,dy),ux=dx/d,uy=dy/d,bx=tip[0]-ux*len,by=tip[1]-uy*len;return `<path d="M${tip[0].toFixed(1)} ${tip[1].toFixed(1)}L${(bx-uy*wd).toFixed(1)} ${(by+ux*wd).toFixed(1)}L${(bx+uy*wd).toFixed(1)} ${(by-ux*wd).toFixed(1)}Z" fill="${c}" stroke="none"/>`};
const AP=[1576,205.700],O2=p8(177,751),A=p8(212,495),Bp=p8(627,164),P=p8(993,388),O4=p8(749,751);
const dot=p=>`<circle cx="${p[0]}" cy="${p[1]}" r="3" fill="#000" stroke="none"/>`;
const D=(cx,cy,rot,s,w=42,c='#000')=>`<text transform="translate(${cx.toFixed(1)} ${cy.toFixed(1)}) rotate(${rot})" x="${-w/2}" y="8" textLength="${w}" lengthAdjust="spacingAndGlyphs" fill="${c}" stroke="none">${s}</text>`;
const D8=(x,y,...r)=>D(...p8(x,y),...r);
define('sketch-view',`:host{display:block;position:relative;flex:1;overflow:hidden;
background:radial-gradient(ellipse 300px 260px at 100% 100%,rgba(236,239,245,.75),transparent),
linear-gradient(transparent 370px,rgba(255,255,255,.25) 440px,rgba(255,255,255,.62) 510px,rgba(255,255,255,.92) 560px,#fff 610px),
radial-gradient(ellipse 560px 210px at 330px 400px,rgba(216,220,233,.75),transparent),
radial-gradient(ellipse 340px 470px at 490px 370px,rgba(214,218,232,.8),rgba(217,220,233,.5) 60%,transparent),
linear-gradient(100deg,#fff 22%,#eaecf3 55%,#e6e9f1 80%,#eef0f5)}
.cv{display:block}.bar{position:absolute;left:0;top:4px;display:flex;align-items:center;height:22px}
.pane{position:absolute;right:0;top:30px;width:33px;display:flex;flex-direction:column;border:1px solid #858585;border-right:0;background:#d3d3d3}
.pane div{height:30px;display:flex;align-items:center;justify-content:center;border-bottom:1px solid #858585}.pane div:first-child{background:#f7f7f7;height:29px}.pane div:last-child{border:0}
.h{position:absolute;left:-1px;top:376px;width:12px;height:49px;border:1px solid #999;background:#f7f7f7}`,
`<svg class="cv" width="685" height="830" viewBox="1234 157 685 830" fill="none" stroke-width="1.200">
<g stroke="#868686">
${L([1556.600,180.700],[1485.700,687])}${L([1550.500,202],AP)}${L([1485,662],A)}
${L([1537.400,191],[1540.500,212])}${L([1540.500,212],[1614.700,561.700])}${L([1614.700,561.700],[1618.700,582.700])}${L([1538.400,213],AP)}${L([1611,562.700],Bp)}
${L([1585,178],[1593.500,196])}${L([1593.500,196],[1797.700,641.300])}${L(AP,[1596,196])}${L(P,[1791.700,620.300])}
${arrow([1553.500,202],[1556.600,180],'#777')}${arrow([1487.700,662],[1485.700,687],'#868686')}${arrow([1540.500,212],[1537.400,191],'#777')}${arrow([1614.700,561.700],[1618.700,582.700],'#868686')}${arrow([1593.500,196],[1585.600,179],'#777')}${arrow([1788.300,621.700],[1797.700,641.300],'#777')}
</g>
<g stroke="#000" stroke-width="1.400" stroke-dasharray="20 4 5 4">${L(AP,A)}${L(AP,Bp)}${L(AP,P)}${L(O2,O4)}</g>
<g stroke="#000" stroke-width="2.400">${L(O2,A)}${L(A,Bp)}${L(Bp,O4)}</g>
<g stroke="#000">${L(Bp,P)}${L(A,P)}
${L(p8(112,473),p8(158,436))}${L(p8(158,433),p8(627,61))}${L(p8(155,428),A)}${L(p8(568,92),Bp)}${arrow(p8(158,434),p8(112,473))}${arrow(p8(575,100),p8(627,61))}
${L(p8(650,93),p8(661,157))}${L(p8(661,157),p8(786,743))}${L(p8(786,743),p8(797,806))}${L(Bp,p8(672,155))}${L(O4,p8(795,741))}${arrow(p8(661,157),p8(650,93))}${arrow(p8(786,743),p8(797,806))}
${L(p8(155,553),p8(217,546))}${L(p8(217,546),p8(1064,429))}${L(A,p8(221,556))}${L(P,p8(999,448))}${arrow(p8(219,546),p8(155,553))}${arrow(p8(997,438),p8(1064,429))}
${L(p8(181,427),p8(127,810))}${L(A,p8(165,489))}${L(O2,p8(127,743))}${arrow(p8(173,489),p8(181,427))}${arrow(p8(136,745),p8(127,810))}
${L(p8(112,828),p8(813,828))}${L(p8(177,760),p8(177,838))}${L(p8(748,760),p8(748,838))}${arrow(p8(177,828),p8(112,828))}${arrow(p8(748,828),p8(813,828))}
<path d="M1506 698.300A52.300 52.300 0 0 1 1551.300 750.300Q1551 760 1547.700 770.700M1488 698.600L1506 698.300"/>${arrow(p8(200,595),p8(145,592))}${arrow(p8(335,751),p8(333,800))}
<path d="M1575.300 586.700L1589.700 601Q1611 626 1612 672.700"/>${arrow(p8(449,303),p8(406,260))}${arrow(p8(515,452),p8(517,518))}
</g>
${[AP,O2,A,Bp,P,O4].map(dot).join('')}
<path d="M1498.700 750V715M1498.700 750.300H1512" stroke="#f00" stroke-width="1.600"/><path d="M1498.700 710L1495 721.500H1502.500ZM1519 750.300L1508 747V753.700Z" fill="#f00"/>
<g font-family="Lato" font-weight="700" font-size="22">
${D(1506.700,455,-81,'5.42',43,'#858585')}${D(1609,473.300,78,'4.17',40,'#858585')}${D(1742,491.700,64,'5.45',43,'#858585')}
${D8(428,175,-38,'2.06',44)}${D8(519,337,57,'31°',33)}${D8(588,458,-3,'3.06',43)}${D8(770,500,79,'2.33',43)}${D8(118,608,-84,'1.00',41)}${D8(354,664,60,'82°',33)}${D8(516,792,0,'2.22',43)}
<text x="1245" y="981.500" font-size="16.500" fill="#111" textLength="60">*Frontal</text></g>
<g><rect x="1281.500" y="890" width="5" height="28" fill="#2e7d32" stroke="#123d14"/><path d="M1284 881L1278.500 893H1289.500Z" fill="#1a6a1e"/><rect x="1287" y="916.500" width="24" height="5" fill="#e0605c" stroke="#6d1111"/><path d="M1321.500 919L1310 913.500V924.500Z" fill="#c41414"/><circle cx="1284" cy="919" r="5.800" fill="#17178c"/>
<path d="M1280.500 868L1284 873L1287.500 868M1284 873V879" stroke="#1c8a1c"/><path d="M1322 912.500L1329 923M1329 912.500L1322 923" stroke="#e02020"/></g>
</svg>
<div class="h"></div>
<div class="bar">${flow(1234,[ci('zfit',1409.300),ci('zarea',1435.500),ci('zprev',1460.700),ci('section',1487),ci('dynview',1512.500),ci('orient',1539),ci('downg',1558.400),ci('style',1579.500),ci('downg',1598.400),ci('eye',1619.300),ci('downg',1638.400),ci('appear',1659.500),ci('scene',1684.300),ci('downg',1704.400),ci('screen',1725),ci('downg',1744.400)])}</div>
<div class="pane">${['home','lib','open','pal','ball','props','chat'].map(n=>`<div>${icon(n)}</div>`).join('')}</div>`);

define('cad-bottom',`:host{display:block;flex:none;height:43px;font-size:14px}
.a{display:flex;height:21px;border-top:1px solid #858585;border-bottom:1px solid #858585;background:#f7f7f7}
.nav{display:flex;flex:none;width:83px;padding-left:2px;border-top:1px solid #111;background:#a6a9c2;gap:1px}
.nav span{flex:1;border:1px solid #8588a3;display:flex;align-items:center;justify-content:center}
.tab{flex:none;display:flex;align-items:center;justify-content:center;background:#d3d3d3;border-right:1px solid #858585}
.tab ui-text{padding-top:2px;line-height:17px}
.on{background:#f7f7f7;font-weight:700}
.s{display:flex;height:22px;background:#e6e6e6;align-items:center;overflow:hidden;padding-top:3px}.s ui-text{line-height:18px}.v{width:1px;height:18px;background:#c4c4c4}`,
`<div class="a"><div class="nav">${['M4 3V11M11 3L6 7L11 11Z','M9 3L4 7L9 11Z','M5 3L10 7L5 11Z','M11 3V11M4 3L9 7L4 11Z'].map(d=>`<span><svg width="14" height="14"><path d="${d}" fill="#7e819c" stroke="#7e819c"/></svg></span>`).join('')}</div>
<div class="tab on" style="width:87px;padding-left:3px">${T('Modelo',58)}</div><div class="tab" style="width:88px">${T('Vistas 3D',65)}</div><div class="tab" style="width:218px;padding-right:10px">${T('Estudio de movimiento 1',172)}</div></div>
<div class="s">${flow(961,[[962,94,T('SOLIDWORK...',93)],[1073,53,T('1.24mm',52)],[1158,58,T('-0.60mm',57)],[1224,54,T('0.00mm',53)],[1299,168,T('Completamente definido',166)],[1472,1,'<i class="v"></i>'],[1480,1,'<i class="v"></i>'],[1484,121,T('Editando Croquis1',120)],[1613,1,'<i class="v"></i>'],ci('lights',1634.500),[1645,1,'<i class="v"></i>'],[1709,46,T('MMGS',44)],ci('tri',1807.500),ci('tag',1885),ci('grip',1911.500,6)])}</div>`);
define('cad-window',`:host{display:flex;flex-direction:column;box-sizing:border-box;width:960px;height:1030px;background:#f7f7f7;border:1px solid #4a4a4a;border-left-color:#777;overflow:hidden}
.mid{display:flex;flex:1;min-height:0}`,
`<cad-menu></cad-menu><cad-ribbon></cad-ribbon><cad-tabs></cad-tabs><div class="mid"><feature-tree></feature-tree><sketch-view></sketch-view></div><cad-bottom></cad-bottom>`);

/* ---------- meeting dialog ---------- */
define('join-dialog',`:host{position:absolute;left:810px;top:476px;width:586px;height:325px;background:rgba(248,248,248,.945);border-radius:4px;box-shadow:0 0 1px 1px rgba(110,110,110,.6),2px 3px 9px rgba(0,0,0,.4);color:#3b3b3b;display:flex;flex-direction:column;align-items:center}
.cam{position:absolute;left:10px;top:10px}
.t{font-size:32.500px;line-height:44px;display:flex;flex-direction:column;align-items:center;margin-top:8px}.t ui-text{line-height:44px}
.p{font-size:18px;margin-top:11px}`,
`<svg class="cam" width="38" height="38"><circle cx="19" cy="19" r="18.500" fill="#d9dadb"/><rect x="8" y="13" width="16" height="12" rx="2" fill="#fff"/><path d="M25 17L30 13.500V24.500L25 21Z" fill="#fff"/></svg>
<svg width="136" height="72" style="margin:63px 0 0 0;align-self:flex-start;margin-left:201px"><g fill="#d3d4d6"><path d="M53 0H91V34H50V3Q50 0 53 0ZM50 37H91V71H53Q50 71 50 68ZM94 37H135V68Q135 71 132 71H94Z"/></g><path d="M97 0H132Q135 0 135 3V31H97Z" fill="#a9aaac"/><path d="M1.500 35.500H34M23 21.500L34.500 35.500L23 49" fill="none" stroke="#48cc04" stroke-width="3" stroke-linecap="round"/></svg>
<div class="t">${T('Unirse a las sesiones para grupos',482)}${T('pequeños......',196)}</div><div class="p">${T('Podría tardar unos minutos.',233)}</div>`);

/* ---------- task bar ---------- */
define('task-bar',`:host{display:flex;height:50px;background:linear-gradient(90deg,#1b2536,#1c2440 40%,#1e263a);align-items:center;color:#fff;flex:none}
.search{height:50px;background:#f2f2f2;border:1px solid #bdbdbd;color:#333;font-size:17px}
.app{height:50px;justify-content:center;padding-top:1px}.run{border-bottom:3px solid #76b9ed;padding-top:3px}
.clock{display:flex;flex-direction:column;align-items:center;font-size:13.500px}.clock ui-text{line-height:22.500px}.e{width:1px;height:50px;background:#6a707c}`,
flow(0,[ci('win',30)])+`<div class="it search" style="margin-left:20px;width:430px">`+flow(61,[ci('mag',85.500),[110,210,T('Escribe aquí para buscar',204)]])+`</div>`
+flow(490,[ci('cort',520),ci('tview',580),ci('folder',644),ci('store',706),ci('nn',768),[814,46,icon('mail'),'padding-top:4px'],ci('subl',892)])
+flow(907,[[929,51,icon('edge')],[991,51,icon('excel')],[1053,51,icon('zoom')],[1115,51,icon('sw19')],[1177,51,icon('chrome')]]).replaceAll('class="it"','class="it app run"')
+flow(1228,[ci('chev',1522),ci('cloud',1552.500),ci('dbox',1581.500),ci('sync',1612.500),ci('batt',1642),ci('wifi',1673),ci('vol',1702),[1728,25,T('ESP',24,'font-size:13.500px')],[1769,77,`<div class="clock">${T('04:37 p. m.',71)}${T('02/04/2020',76)}</div>`],[1869,32,icon('notif'),'margin-top:10px'],[1915,1,'<i class="e"></i>']]));

define('desk-top',`:host{display:flex;flex-direction:column;width:1920px;height:1080px;position:relative}.w{display:flex;height:1030px;flex:none}`,
`<div class="w"><browser-window></browser-window><cad-window></cad-window></div><task-bar></task-bar><join-dialog></join-dialog>`);
</script>
</body>
</html>
